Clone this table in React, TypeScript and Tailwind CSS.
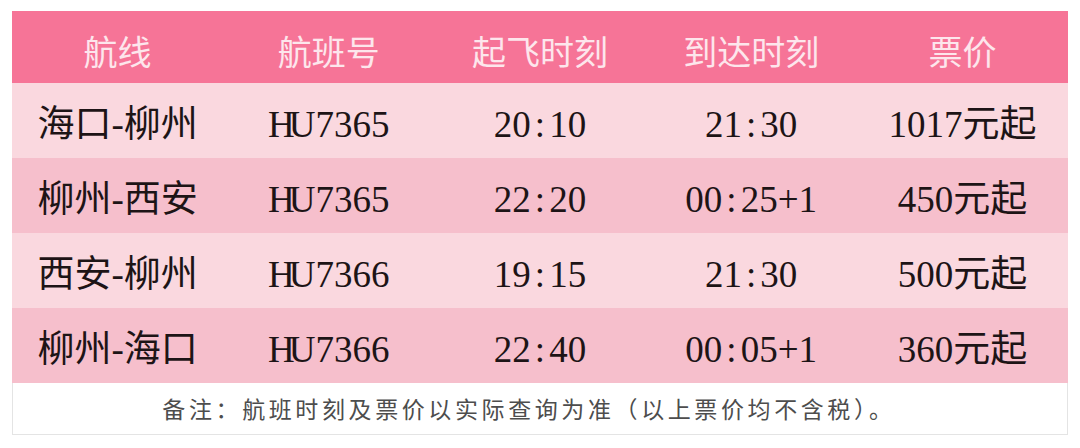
const rows = [
  { route: "海口-柳州", no: "7365", dep: ["20", "10"], arr: ["21", "30", ""], price: "1017" },
  { route: "柳州-西安", no: "7365", dep: ["22", "20"], arr: ["00", "25", "+1"], price: "450" },
  { route: "西安-柳州", no: "7366", dep: ["19", "15"], arr: ["21", "30", ""], price: "500" },
  { route: "柳州-海口", no: "7366", dep: ["22", "40"], arr: ["00", "05", "+1"], price: "360" },
]

const headers = ["航线", "航班号", "起飞时刻", "到达时刻", "票价"]

function Time({ h, m, extra = "" }: { h: string; m: string; extra?: string }) {
  return (
    <span>
      {h}
      <span className="mx-[4px]">:</span>
      {m}
      {extra}
    </span>
  )
}

export default function App() {
  return (
    <div className="w-[1080px] h-[448px] bg-white pt-[11px] px-[12px] overflow-hidden">
      <div className="grid grid-cols-5 h-[72px] bg-[#f67497] text-[#fde6ec] text-[34px] pt-[6px] font-['Noto_Sans_CJK_SC',sans-serif]">
        {headers.map((h) => (
          <div key={h} className="flex items-center justify-center">{h}</div>
        ))}
      </div>

      {rows.map((r, i) => (
        <div
          key={i}
          className={`grid grid-cols-5 h-[75px] pt-[8px] text-[37px] text-[#1d1416] font-['Liberation_Serif','Noto_Sans_CJK_SC',serif] ${i % 2 === 0 ? "bg-[#fad8df]" : "bg-[#f6bfcc]"}`}
        >
          <div className="flex items-center justify-center">{r.route}</div>
          <div className="flex items-center justify-center">
            <span className="tracking-[-6px] mr-[6px]">HU</span>
            {r.no}
          </div>
          <div className="flex items-center justify-center">
            <Time h={r.dep[0]} m={r.dep[1]} />
          </div>
          <div className="flex items-center justify-center">
            <Time h={r.arr[0]} m={r.arr[1]} extra={r.arr[2]} />
          </div>
          <div className="flex items-center justify-center">
            {r.price}元起
          </div>
        </div>
      ))}

      <div className="h-[52px] border-x border-b border-[#e4e4e4] flex items-center justify-center pr-[22px] text-[23px] tracking-[3.6px] text-[#4d4d4d] font-['Noto_Sans_CJK_SC',sans-serif]">
        备注：航班时刻及票价以实际查询为准（以上票价均不含税）。
      </div>
    </div>
  )
}
